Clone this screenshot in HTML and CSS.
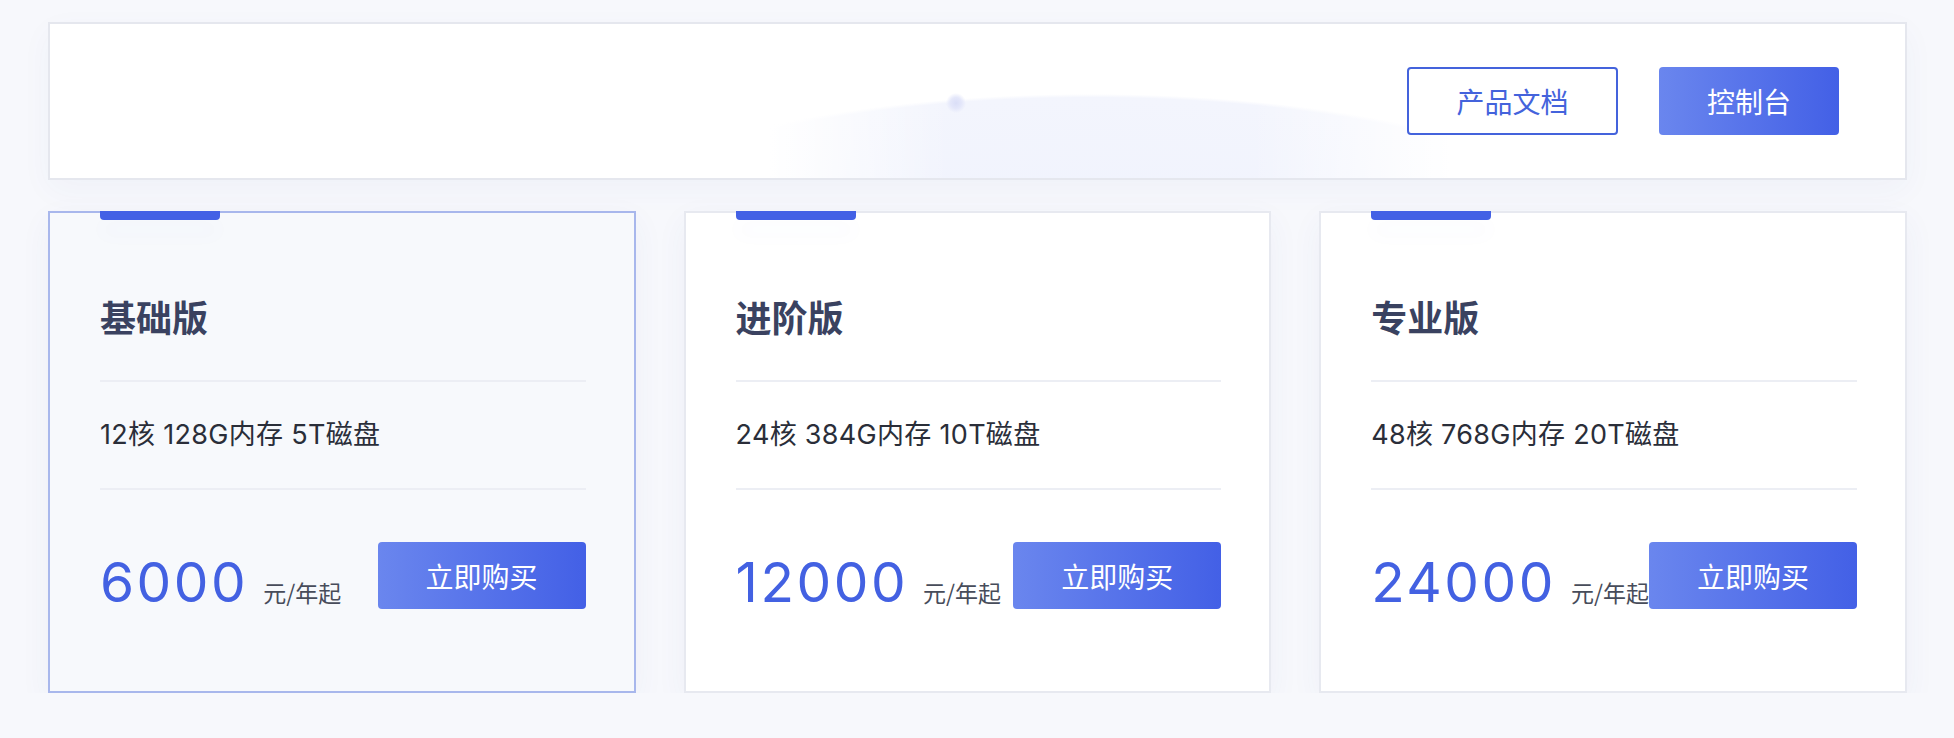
FILE: index.html
```html
<!DOCTYPE html>
<html lang="zh-CN">
<head>
    <meta charset="UTF-8">
    <meta name="viewport" content="width=device-width, initial-scale=1.0">
    <title>产品价格</title>
    <link rel="stylesheet" href="styles.css">
</head>
<body>
    <div class="page">
        <div class="banner">
            <button class="btn btn-outline">产品文档</button>
            <button class="btn btn-primary">控制台</button>
        </div>

        <div class="plans">
            <div class="plan plan-active">
                <div class="plan-tab"></div>
                <h2 class="plan-title">基础版</h2>
                <p class="plan-spec">12核 128G内存 5T磁盘</p>
                <div class="plan-footer">
                    <div class="price">
                        <span class="price-num">6000</span>
                        <span class="price-unit">元/年起</span>
                    </div>
                    <button class="btn btn-primary btn-buy">立即购买</button>
                </div>
            </div>

            <div class="plan">
                <div class="plan-tab"></div>
                <h2 class="plan-title">进阶版</h2>
                <p class="plan-spec">24核 384G内存 10T磁盘</p>
                <div class="plan-footer">
                    <div class="price">
                        <span class="price-num">12000</span>
                        <span class="price-unit">元/年起</span>
                    </div>
                    <button class="btn btn-primary btn-buy">立即购买</button>
                </div>
            </div>

            <div class="plan">
                <div class="plan-tab"></div>
                <h2 class="plan-title">专业版</h2>
                <p class="plan-spec">48核 768G内存 20T磁盘</p>
                <div class="plan-footer">
                    <div class="price">
                        <span class="price-num">24000</span>
                        <span class="price-unit">元/年起</span>
                    </div>
                    <button class="btn btn-primary btn-buy">立即购买</button>
                </div>
            </div>
        </div>
    </div>
</body>
</html>
```

FILE: styles.css
```css
body {
    margin: 0;
    background-color: #f7f8fc;
    font-family: "Inter", "Noto Sans CJK SC", sans-serif;
}
.page {
    padding: 22px 47px 0 48px;
}
/* faint arc + dot drawn as background layers of the banner */
.banner {
    display: flex;
    justify-content: flex-end;
    align-items: center;
    gap: 41px;
    height: 154px;
    padding-right: 66px;
    border: 2px solid #e5e7ee;
    background:
        radial-gradient(circle 10px at 906px 79px, #dadef7 0, #e4e7fa 55%, rgba(255,255,255,0) 100%),
        linear-gradient(90deg, #fff 720px, rgba(255,255,255,0) 900px, rgba(255,255,255,0) 1200px, #fff 1400px),
        radial-gradient(ellipse 560px 175px at 1040px 245px, #eff2fd 0, #f3f5fd 98%, rgba(255,255,255,0) 100%),
        #fff;
    box-shadow: 0 10px 30px rgba(50,70,150,0.04);
}
.btn {
    flex-shrink: 0;
    height: 68px;
    border-radius: 4px;
    font-family: "Noto Sans CJK SC", sans-serif;
    font-size: 28px;
    cursor: pointer;
}
.btn-outline {
    width: 211px;
    background-color: #fff;
    border: 2px solid #4463dc;
    color: #4463dc;
}
.btn-primary {
    width: 180px;
    border: none;
    color: #fff;
    background: linear-gradient(90deg, #6a86ee, #4360e6);
}
.plans {
    display: grid;
    grid-template-columns: repeat(3, 1fr);
    gap: 48px;
    margin-top: 31px;
}
.plan {
    padding: 0 48px 82px 50px;
    background-color: #fff;
    border: 2px solid #e7e9f0;
    box-shadow: 0 10px 30px rgba(50,70,150,0.05);
}
.plan-active {
    background-color: #f7f9fc;
    border-color: #a8b7ec;
}
.plan-tab {
    width: 120px;
    height: 9px;
    margin-top: -2px;
    background-color: #4361e5;
    border-radius: 0 0 4px 4px;
    box-shadow: 0 14px 20px rgba(67,97,229,0.03);
}
.plan-title {
    margin: 70px 0 0;
    padding-bottom: 37px;
    border-bottom: 2px solid #eceef4;
    font-family: "Noto Sans CJK SC", sans-serif;
    font-size: 36px;
    line-height: 53px;
    font-weight: 600;
    color: #3a4260;
}
.plan-spec {
    margin: 0;
    padding: 35px 0;
    border-bottom: 2px solid #eceef4;
    font-size: 27px;
    line-height: 36px;
    letter-spacing: 0.3px;
    color: #2a2e39;
}
.plan-footer {
    display: flex;
    justify-content: space-between;
    align-items: flex-end;
    margin-top: 52px;
}
.price {
    display: flex;
    align-items: baseline;
    gap: 15px;
    white-space: nowrap;
}
.price-num {
    font-size: 55px;
    line-height: 54px;
    letter-spacing: 2.5px;
    color: #4361e2;
}
.price-unit {
    font-family: "Noto Sans CJK SC", sans-serif;
    font-size: 23px;
    color: #474c5a;
}
.btn-buy {
    width: 208px;
    height: 67px;
}
```
